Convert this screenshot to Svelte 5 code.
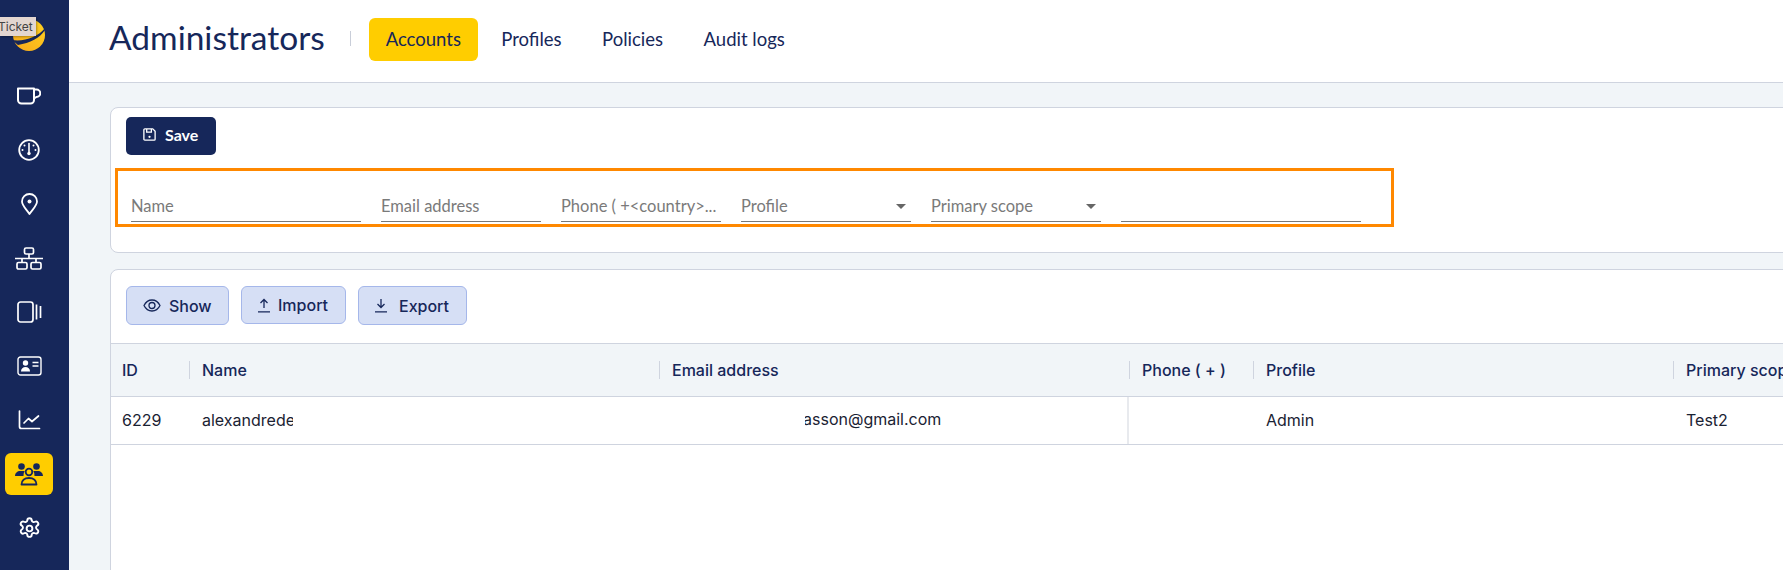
<script>
  const tabs = ['Accounts', 'Profiles', 'Policies', 'Audit logs'];
  const fields = [
    { label: 'Name', width: 230 },
    { label: 'Email address', width: 160 },
    { label: 'Phone ( +<country>...', width: 160 },
    { label: 'Profile', width: 170, select: true },
    { label: 'Primary scope', width: 170, select: true },
    { label: '', width: 240 }
  ];
  const columns = ['ID', 'Name', 'Email address', 'Phone ( + )', 'Profile', 'Primary scope'];
</script>

<div class="page">
  <nav class="sidebar">
    <div class="logo">
      <svg width="34" height="34" viewBox="0 0 34 34">
        <defs>
          <linearGradient id="moon" x1="0" y1="1" x2="1" y2="0">
            <stop offset="0" stop-color="#f7a81b" />
            <stop offset="1" stop-color="#ffd21f" />
          </linearGradient>
        </defs>
        <circle cx="17" cy="17" r="16" fill="url(#moon)" />
        <path d="M0 22C12 24 26 19 33 10L33 12C28 20 18 25 6 27Z" fill="#16275a" />
      </svg>
      <span class="tooltip">Ticket</span>
    </div>
    <a class="item" href="#cup" aria-label="Tickets">
      <svg width="24" height="18" viewBox="0 0 24 18" fill="none" stroke="currentColor" stroke-width="2">
        <path d="M1 1.500H17V13a3.500 3.500 0 0 1-3.500 3.500H4.500A3.500 3.500 0 0 1 1 13Z" stroke-linejoin="round" />
        <path d="M17 2.500h2.500a3.300 3.300 0 0 1 0 7.500L17 11.500" />
      </svg>
    </a>
    <a class="item" href="#gauge" aria-label="Dashboard">
      <svg width="22" height="22" viewBox="0 0 22 22" fill="none" stroke="currentColor" stroke-width="2">
        <circle cx="11" cy="11" r="9.800" stroke-width="1.800" />
        <path d="M11 4.500v9" stroke-width="1.600" stroke-linecap="round" />
        <circle cx="11" cy="14.500" r="1.700" fill="currentColor" stroke="none" />
        <circle cx="6.500" cy="6.500" r="1" fill="currentColor" stroke="none" />
        <circle cx="15.500" cy="6.500" r="1" fill="currentColor" stroke="none" />
        <circle cx="4.500" cy="11" r="1" fill="currentColor" stroke="none" />
        <circle cx="17.500" cy="11" r="1" fill="currentColor" stroke="none" />
      </svg>
    </a>
    <a class="item" href="#pin" aria-label="Locations">
      <svg width="17" height="22" viewBox="0 0 17 22" fill="none" stroke="currentColor" stroke-width="1.800">
        <path d="M8.500 21C5.500 16.500 1 12.500 1 8.500a7.500 7.500 0 0 1 15 0C16 12.500 11.500 16.500 8.500 21Z" stroke-linejoin="round" />
        <circle cx="8.500" cy="8.500" r="2" fill="currentColor" stroke="none" />
      </svg>
    </a>
    <a class="item" href="#network" aria-label="Network">
      <svg width="28" height="23" viewBox="0 0 28 23" fill="none" stroke="currentColor" stroke-width="1.700">
        <rect x="9.500" y="1" width="9" height="6" rx="1.500" />
        <rect x="2" y="15.500" width="10" height="6.500" rx="1.500" />
        <rect x="16" y="15.500" width="10" height="6.500" rx="1.500" />
        <path d="M14 7V11.500M0 11.500H28M7 11.500v4M21 11.500v4" />
      </svg>
    </a>
    <a class="item" href="#devices" aria-label="Devices">
      <svg width="25" height="22" viewBox="0 0 25 22" fill="none" stroke="currentColor" stroke-width="1.700">
        <rect x="1" y="1" width="15" height="20" rx="2.500" />
        <path d="M19.500 3.500v15M23.500 5v12" />
      </svg>
    </a>
    <a class="item" href="#ids" aria-label="Contacts">
      <svg width="25" height="20" viewBox="0 0 25 20" fill="none" stroke="currentColor" stroke-width="1.400">
        <rect x="1" y="1" width="23" height="18" rx="2.500" />
        <circle cx="8.500" cy="7" r="2.700" fill="currentColor" stroke="none" />
        <path d="M4 15.500c0-3 2-4.500 4.500-4.500s4.500 1.500 4.500 4.500Z" fill="currentColor" stroke="none" />
        <path d="M15.500 6.500h6M15.500 10h6" />
      </svg>
    </a>
    <a class="item" href="#chart" aria-label="Statistics">
      <svg width="23" height="20" viewBox="0 0 23 20" fill="none" stroke="currentColor" stroke-width="1.700">
        <path d="M1.500 1v15.500a2 2 0 0 0 2 2h18" stroke-linecap="round" />
        <path d="M6 13l4.500-4.500 3.500 3 6.500-5.500" stroke-linecap="round" stroke-linejoin="round" />
      </svg>
    </a>
    <a class="item active" href="#admins" aria-label="Administrators">
      <svg width="28" height="23" viewBox="0 0 28 23" fill="#16275a">
        <circle cx="6.500" cy="3.500" r="3.300" />
        <circle cx="21.500" cy="3.500" r="3.300" />
        <path d="M0 13c0-3 2.500-5 5-5h3c.6 0 1.200.1 1.700.3A5.500 5.500 0 0 0 8.500 13Z" />
        <path d="M28 13c0-3-2.500-5-5-5h-3c-.6 0-1.200.1-1.700.3A5.500 5.500 0 0 1 19.500 13Z" />
        <circle cx="14" cy="9" r="3.300" fill="none" stroke="#16275a" stroke-width="1.800" />
        <path d="M6.500 21.500c0-4 3-6.500 7.500-6.500s7.500 2.500 7.500 6.500Z" fill="none" stroke="#16275a" stroke-width="1.800" stroke-linejoin="round" />
      </svg>
    </a>
    <a class="item" href="#settings" aria-label="Settings">
      <svg width="23" height="23" viewBox="0 0 24 24" fill="none" stroke="currentColor" stroke-width="2" stroke-linejoin="round">
        <path d="M9.700 2.600a2.300 2.300 0 0 1 4.600 0 2.300 2.300 0 0 0 3.400 1.400 2.300 2.300 0 0 1 2.300 4 2.300 2.300 0 0 0 0 4 2.300 2.300 0 0 1-2.300 4 2.300 2.300 0 0 0-3.400 1.400 2.300 2.300 0 0 1-4.600 0 2.300 2.300 0 0 0-3.400-1.400 2.300 2.300 0 0 1-2.300-4 2.300 2.300 0 0 0 0-4 2.300 2.300 0 0 1 2.300-4 2.300 2.300 0 0 0 3.400-1.400Z" transform="translate(0 1)" />
        <circle cx="12" cy="12" r="3" />
      </svg>
    </a>
  </nav>

  <div class="content">
    <header>
      <h1>Administrators</h1>
      <span class="divider"></span>
      <div class="tabs">
        {#each tabs as tab, i}
          <a class="tab" class:selected={i === 0} href="#tab">{tab}</a>
        {/each}
      </div>
    </header>

    <main>
      <section class="card form-card">
        <button class="save">
          <svg width="15" height="15" viewBox="0 0 16 16" fill="none" stroke="currentColor" stroke-width="1.400">
            <path d="M2 3a1 1 0 0 1 1-1h8.500L14 4.500V13a1 1 0 0 1-1 1H3a1 1 0 0 1-1-1Z" stroke-linejoin="round" />
            <path d="M5 2v3.500h5V2" />
            <circle cx="8" cy="10.500" r="1.200" fill="currentColor" stroke="none" />
          </svg>
          Save
        </button>
        <div class="fields">
          {#each fields as field}
            <div class="field" style="width: {field.width}px">
              <span>{field.label}</span>
              {#if field.select}<i class="caret"></i>{/if}
            </div>
          {/each}
        </div>
      </section>

      <section class="card list-card">
        <div class="actions">
          <button class="action show">
            <svg width="18" height="17" viewBox="0 0 18 17" fill="none" stroke="currentColor" stroke-width="1.300">
              <path d="M1 8.500C3 4.500 5.800 3 9 3s6 1.500 8 5.500c-2 4-4.800 5.500-8 5.500S3 12.500 1 8.500Z" />
              <circle cx="9" cy="8.500" r="3" />
            </svg>
            Show
          </button>
          <button class="action import">
            <svg width="14" height="15" viewBox="0 0 14 15" fill="none" stroke="currentColor" stroke-width="1.300">
              <path d="M7 10V1.500M3.500 5L7 1.500 10.500 5M1 13.800h12" />
            </svg>
            Import
          </button>
          <button class="action export">
            <svg width="14" height="15" viewBox="0 0 14 15" fill="none" stroke="currentColor" stroke-width="1.300">
              <path d="M7 1v8.500M3.500 6L7 9.500 10.500 6M1 13.800h12" />
            </svg>
            Export
          </button>
        </div>

        <div class="table">
          <div class="row head">
            {#each columns as col}
              <div class="cell"><span class="title">{col}</span></div>
            {/each}
          </div>
          <div class="row body">
            <div class="cell">6229</div>
            <div class="cell"><span class="clip">alexandrede</span></div>
            <div class="cell email"><span class="clip-left">asson@gmail.com</span></div>
            <div class="cell"></div>
            <div class="cell">Admin</div>
            <div class="cell">Test2</div>
          </div>
        </div>
      </section>
    </main>
  </div>
</div>

<style>
  :global(body) {
    margin: 0;
    overflow: hidden;
  }

  .page {
    display: flex;
    width: 1783px;
    height: 570px;
    overflow: hidden;
    background: #f1f5f8;
    font-family: Lato, "Open Sans", sans-serif;
    color: #16275a;
  }

  .sidebar {
    flex: 0 0 69px;
    box-sizing: border-box;
    padding-right: 11px;
    background: #16275a;
    display: flex;
    flex-direction: column;
    align-items: center;
    color: #fff;
  }

  .logo {
    position: relative;
    height: 75px;
    padding-bottom: 5px;
    box-sizing: border-box;
    width: 100%;
    display: flex;
    align-items: center;
    justify-content: center;
    flex: none;
  }

  .tooltip {
    position: absolute;
    left: 0;
    top: 17px;
    width: 36px;
    height: 19px;
    overflow: hidden;
    background: #e3d6d0;
    color: #444;
    font: 12px/19px Inter, sans-serif;
    text-indent: -2px;
    box-shadow: 1px 1px 2px rgba(0, 0, 0, 0.3);
  }

  .item {
    flex: none;
    display: flex;
    align-items: center;
    justify-content: center;
    width: 48px;
    height: 42px;
    margin-bottom: 12px;
    border-radius: 6px;
    color: #fff;
  }

  .item.active {
    background: #ffcd00;
  }

  .content {
    flex: 1;
    min-width: 0;
    display: flex;
    flex-direction: column;
  }

  header {
    flex: none;
    display: flex;
    align-items: center;
    background: #fff;
    border-bottom: 1px solid #cfd4df;
    padding: 0 0 6px 40px;
    height: 76px;
  }

  h1 {
    margin: 0;
    font-size: 33.500px;
    font-weight: 400;
    line-height: 1;
  }

  .divider {
    width: 1px;
    height: 15px;
    margin: 0 18px 0 25px;
    background: #c9ced9;
  }

  .tabs {
    display: flex;
    align-items: center;
    gap: 6.500px;
    margin-top: 2px;
  }

  .tab {
    height: 43px;
    display: flex;
    align-items: center;
    padding: 0 17px;
    color: #16275a;
    font-size: 18.500px;
    text-decoration: none;
  }

  .tab.selected {
    background: #ffcd00;
    border-radius: 6px;
    box-sizing: border-box;
    width: 109px;
    padding: 0;
    justify-content: center;
  }

  main {
    flex: 1;
    padding: 24px 0 0 41px;
    width: 1750px;
    box-sizing: border-box;
  }

  .card {
    background: #fff;
    border: 1px solid #cfd4df;
    border-radius: 8px;
  }

  .form-card {
    height: 146px;
    box-sizing: border-box;
    padding: 9px 4px;
    margin-bottom: 16px;
  }

  .save {
    display: flex;
    align-items: center;
    gap: 8px;
    height: 38px;
    width: 90px;
    margin-left: 11px;
    padding: 0 0 3px 16px;
    border: 0;
    border-radius: 5px;
    background: #16275a;
    color: #fff;
    font: 700 16px Lato, sans-serif;
  }

  .fields {
    margin-top: 13px;
    width: 1260px;
    height: 51px;
    border: 3px solid #ff8800;
    display: flex;
    align-items: flex-end;
    gap: 20px;
    padding: 0 0 2px 13px;
  }

  .field {
    flex: none;
    position: relative;
    height: 30px;
    border-bottom: 1px solid #777;
    color: #7a7a7a;
    font-size: 16.500px;
    line-height: 30px;
    font-weight: 400;
    white-space: nowrap;
    overflow: hidden;
  }

  .caret {
    position: absolute;
    right: 5px;
    top: 13px;
    border: 5px solid transparent;
    border-top: 5px solid #666;
    border-bottom: 0;
  }

  .list-card {
    height: 400px;
    padding-top: 16px;
    box-sizing: border-box;
  }

  .actions {
    display: flex;
    align-items: flex-start;
    gap: 12px;
    padding-left: 15px;
    margin-bottom: 18px;
  }

  .action {
    display: flex;
    align-items: center;
    height: 39px;
    border: 1px solid #a5b7ea;
    border-radius: 6px;
    background: #d6dff5;
    color: #16275a;
    font: 500 16px Inter, sans-serif;
    padding: 0;
    box-sizing: border-box;
  }

  .show {
    width: 103px;
    gap: 8px;
    padding-left: 16px;
  }

  .import {
    width: 105px;
    height: 38px;
    gap: 7px;
    padding-left: 15px;
  }

  .export {
    width: 109px;
    gap: 11px;
    padding-left: 15px;
  }

  .table {
    border-top: 1px solid #cfd4df;
  }

  .row {
    display: grid;
    grid-template-columns: 78px 470px 470px 124px 420px 1fr;
    border-bottom: 1px solid #cfd4df;
  }

  .head {
    height: 52px;
    background: #f1f5f8;
    align-items: center;
    font: 500 16px Inter, sans-serif;
  }

  .head .cell {
    height: 18px;
    line-height: 18px;
    border-left: 1px solid #cfd4df;
    padding-left: 12px;
    white-space: nowrap;
  }

  .head .cell:first-child {
    border-left: 0;
    padding-left: 11px;
  }

  .body {
    height: 47px;
    align-items: center;
    font: 400 16px Inter, sans-serif;
    color: #1a2233;
  }

  .body .cell {
    padding: 0 0 2px 13px;
    white-space: nowrap;
  }

  .body .cell:first-child {
    padding-left: 11px;
  }

  .clip {
    display: block;
    width: 91px;
    overflow: hidden;
  }

  .clip-left {
    display: block;
    overflow: hidden;
    text-indent: -2px;
  }

  .body .cell.email {
    padding: 0 0 0 146px;
    height: 100%;
    line-height: 45px;
    border-right: 2px solid #e8eaee;
    box-sizing: border-box;
  }
</style>
